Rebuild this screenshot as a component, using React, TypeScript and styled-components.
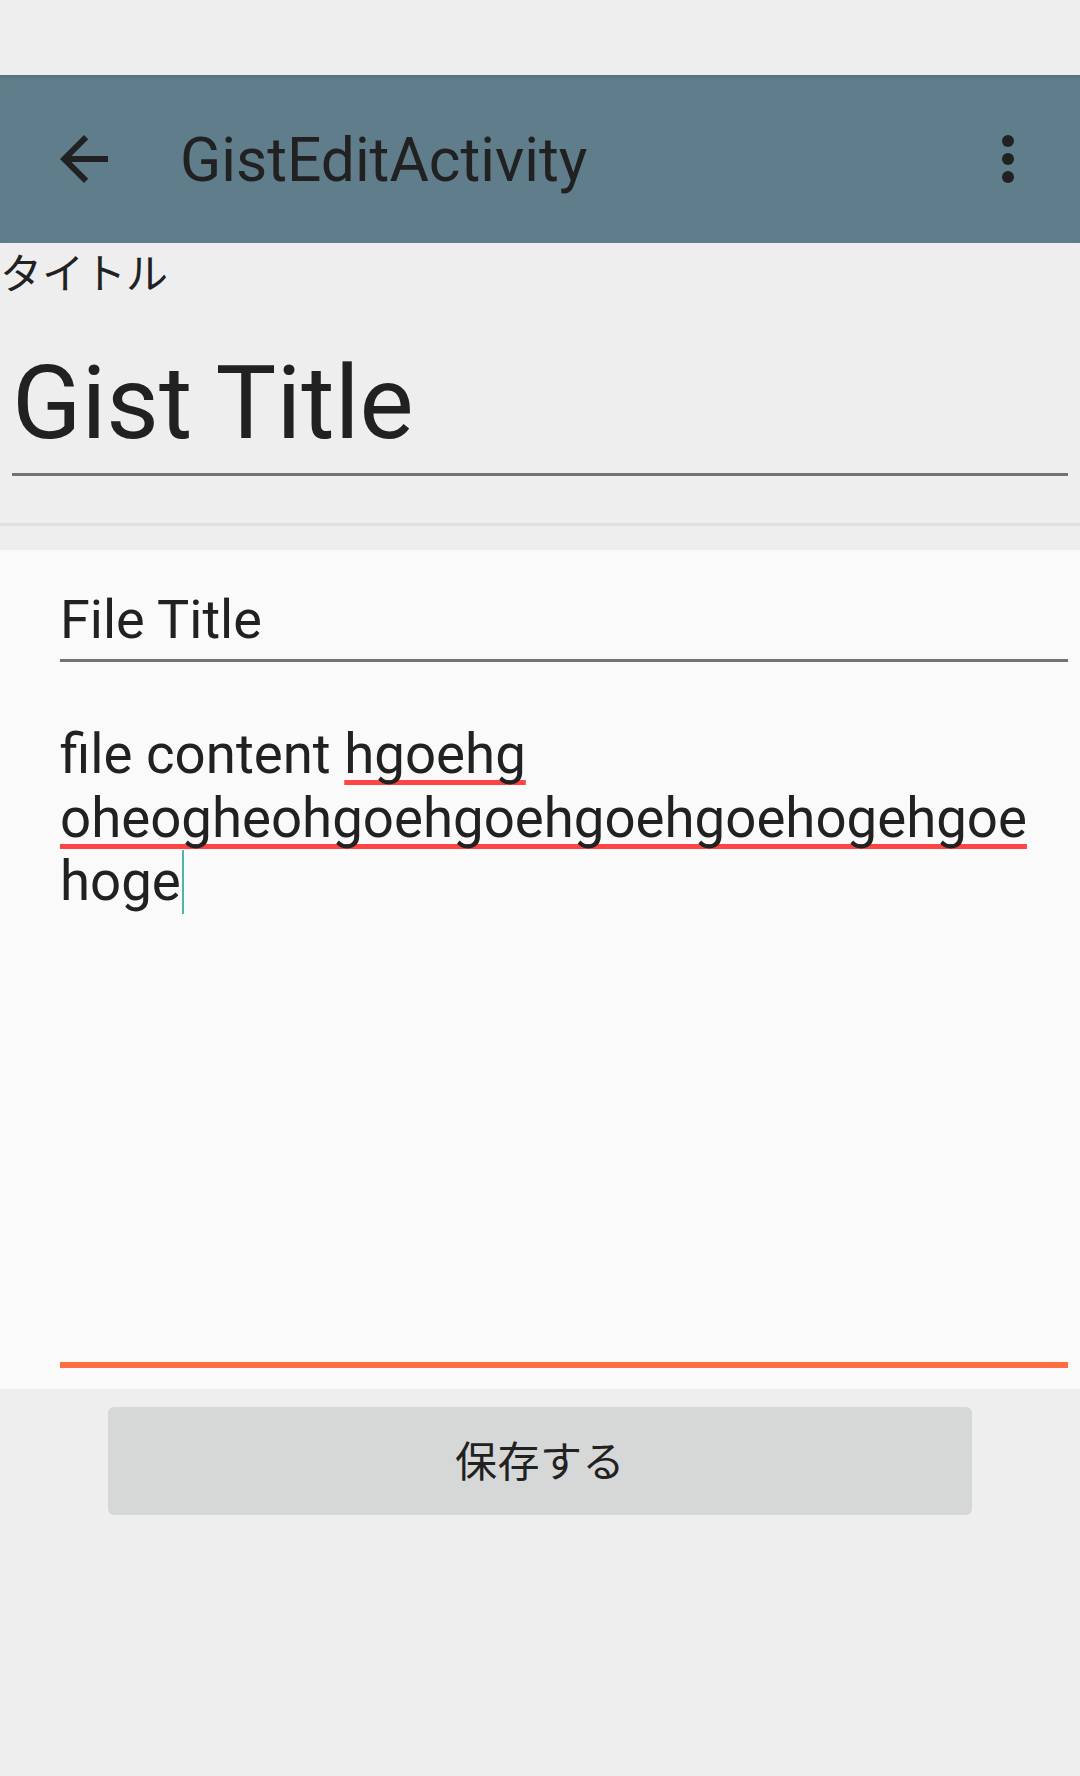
import React, { FC } from "react";
import styled, { createGlobalStyle } from "styled-components";

const GlobalStyle = createGlobalStyle`
  html, body {
    margin: 0;
    padding: 0;
    background: #eeeeee;
  }
  body {
    font-family: Roboto, "Noto Sans CJK JP", sans-serif;
    color: #212121;
  }
`;

const Screen = styled.div`
  display: flex;
  flex-direction: column;
  width: 1080px;
  height: 1776px;
  background: #eeeeee;
  overflow: hidden;
`;

const StatusBar = styled.div`
  height: 75px;
  background: #eeeeee;
`;

const Toolbar = styled.header`
  display: flex;
  align-items: center;
  height: 168px;
  background: #607d8b;
  box-shadow: inset 0 5px 5px -3px rgba(0, 0, 0, 0.12);
`;

const NavButton = styled.div`
  display: flex;
  align-items: center;
  justify-content: center;
  width: 168px;
  height: 168px;
`;

const ToolbarTitle = styled.h1`
  flex: 1;
  margin: 4px 0 0 12px;
  color: #212121;
  font-family: Roboto, sans-serif;
  font-size: 60.5px;
  font-weight: 400;
  line-height: 70px;
`;

const OverflowButton = styled.div`
  display: flex;
  align-items: center;
  justify-content: center;
  width: 144px;
  height: 168px;
`;

const Label = styled.div`
  margin-top: 11px;
  color: #212121;
  font-family: Roboto, "Noto Sans CJK JP", sans-serif;
  font-size: 42px;
  line-height: 42px;
`;

const GistField = styled.div`
  margin: 0 12px;
  padding: 46px 0 9px 0;
  border-bottom: 3px solid #737373;
  font-size: 102px;
  line-height: 122px;
  color: #212121;
`;

const Divider = styled.div`
  height: 3px;
  margin-top: 47px;
  background: #e0e0e0;
`;

const FileCard = styled.section`
  display: flex;
  flex-direction: column;
  margin-top: 24px;
  padding: 38px 12px 21px 60px;
  background: #fafafa;
`;

const FileTitleField = styled.div`
  padding-bottom: 8px;
  border-bottom: 3px solid #737373;
  font-size: 54px;
  line-height: 63px;
  color: #212121;
`;

const ContentField = styled.div`
  box-sizing: border-box;
  height: 645px;
  margin-top: 61px;
  border-bottom: 6px solid #ff6e40;
  font-size: 54.6px;
  line-height: 63.5px;
  color: #212121;
`;

const Misspelled = styled.span`
  text-decoration: underline;
  text-decoration-color: #ff4444;
  text-decoration-thickness: 5px;
  text-underline-offset: 7px;
  text-decoration-skip-ink: none;
`;

const Cursor = styled.span`
  display: inline-block;
  width: 2px;
  height: 64px;
  margin-left: 1px;
  vertical-align: top;
  background: #4db6ac;
`;

const SaveButton = styled.button`
  display: block;
  width: 864px;
  height: 108px;
  margin: 18px auto 0;
  padding: 0 0 6px;
  border: none;
  border-radius: 6px;
  background: #d6d7d7;
  color: #212121;
  font-family: Roboto, "Noto Sans CJK JP", sans-serif;
  font-size: 42px;
  letter-spacing: 0.5px;
`;

const BackIcon: FC = () => (
  <svg width="72" height="72" viewBox="0 0 24 24">
    <path fill="#212121" d="M20 11H7.83l5.59-5.59L12 4l-8 8 8 8 1.41-1.41L7.83 13H20v-2z" />
  </svg>
);

const MoreIcon: FC = () => (
  <svg width="72" height="72" viewBox="0 0 24 24">
    <circle cx="12" cy="6" r="2" fill="#212121" />
    <circle cx="12" cy="12" r="2" fill="#212121" />
    <circle cx="12" cy="18" r="2" fill="#212121" />
  </svg>
);

const App: FC = () => (
  <>
    <GlobalStyle />
    <Screen>
      <StatusBar />
      <Toolbar>
        <NavButton>
          <BackIcon />
        </NavButton>
        <ToolbarTitle>GistEditActivity</ToolbarTitle>
        <OverflowButton>
          <MoreIcon />
        </OverflowButton>
      </Toolbar>
      <Label>タイトル</Label>
      <GistField>Gist Title</GistField>
      <Divider />
      <FileCard>
        <FileTitleField>File Title</FileTitleField>
        <ContentField>
          file content <Misspelled>hgoehg</Misspelled>
          <br />
          <Misspelled>oheogheohgoehgoehgoehgoehogehgoe</Misspelled>
          <br />
          hoge
          <Cursor />
        </ContentField>
      </FileCard>
      <SaveButton>保存する</SaveButton>
    </Screen>
  </>
);

export default App;
